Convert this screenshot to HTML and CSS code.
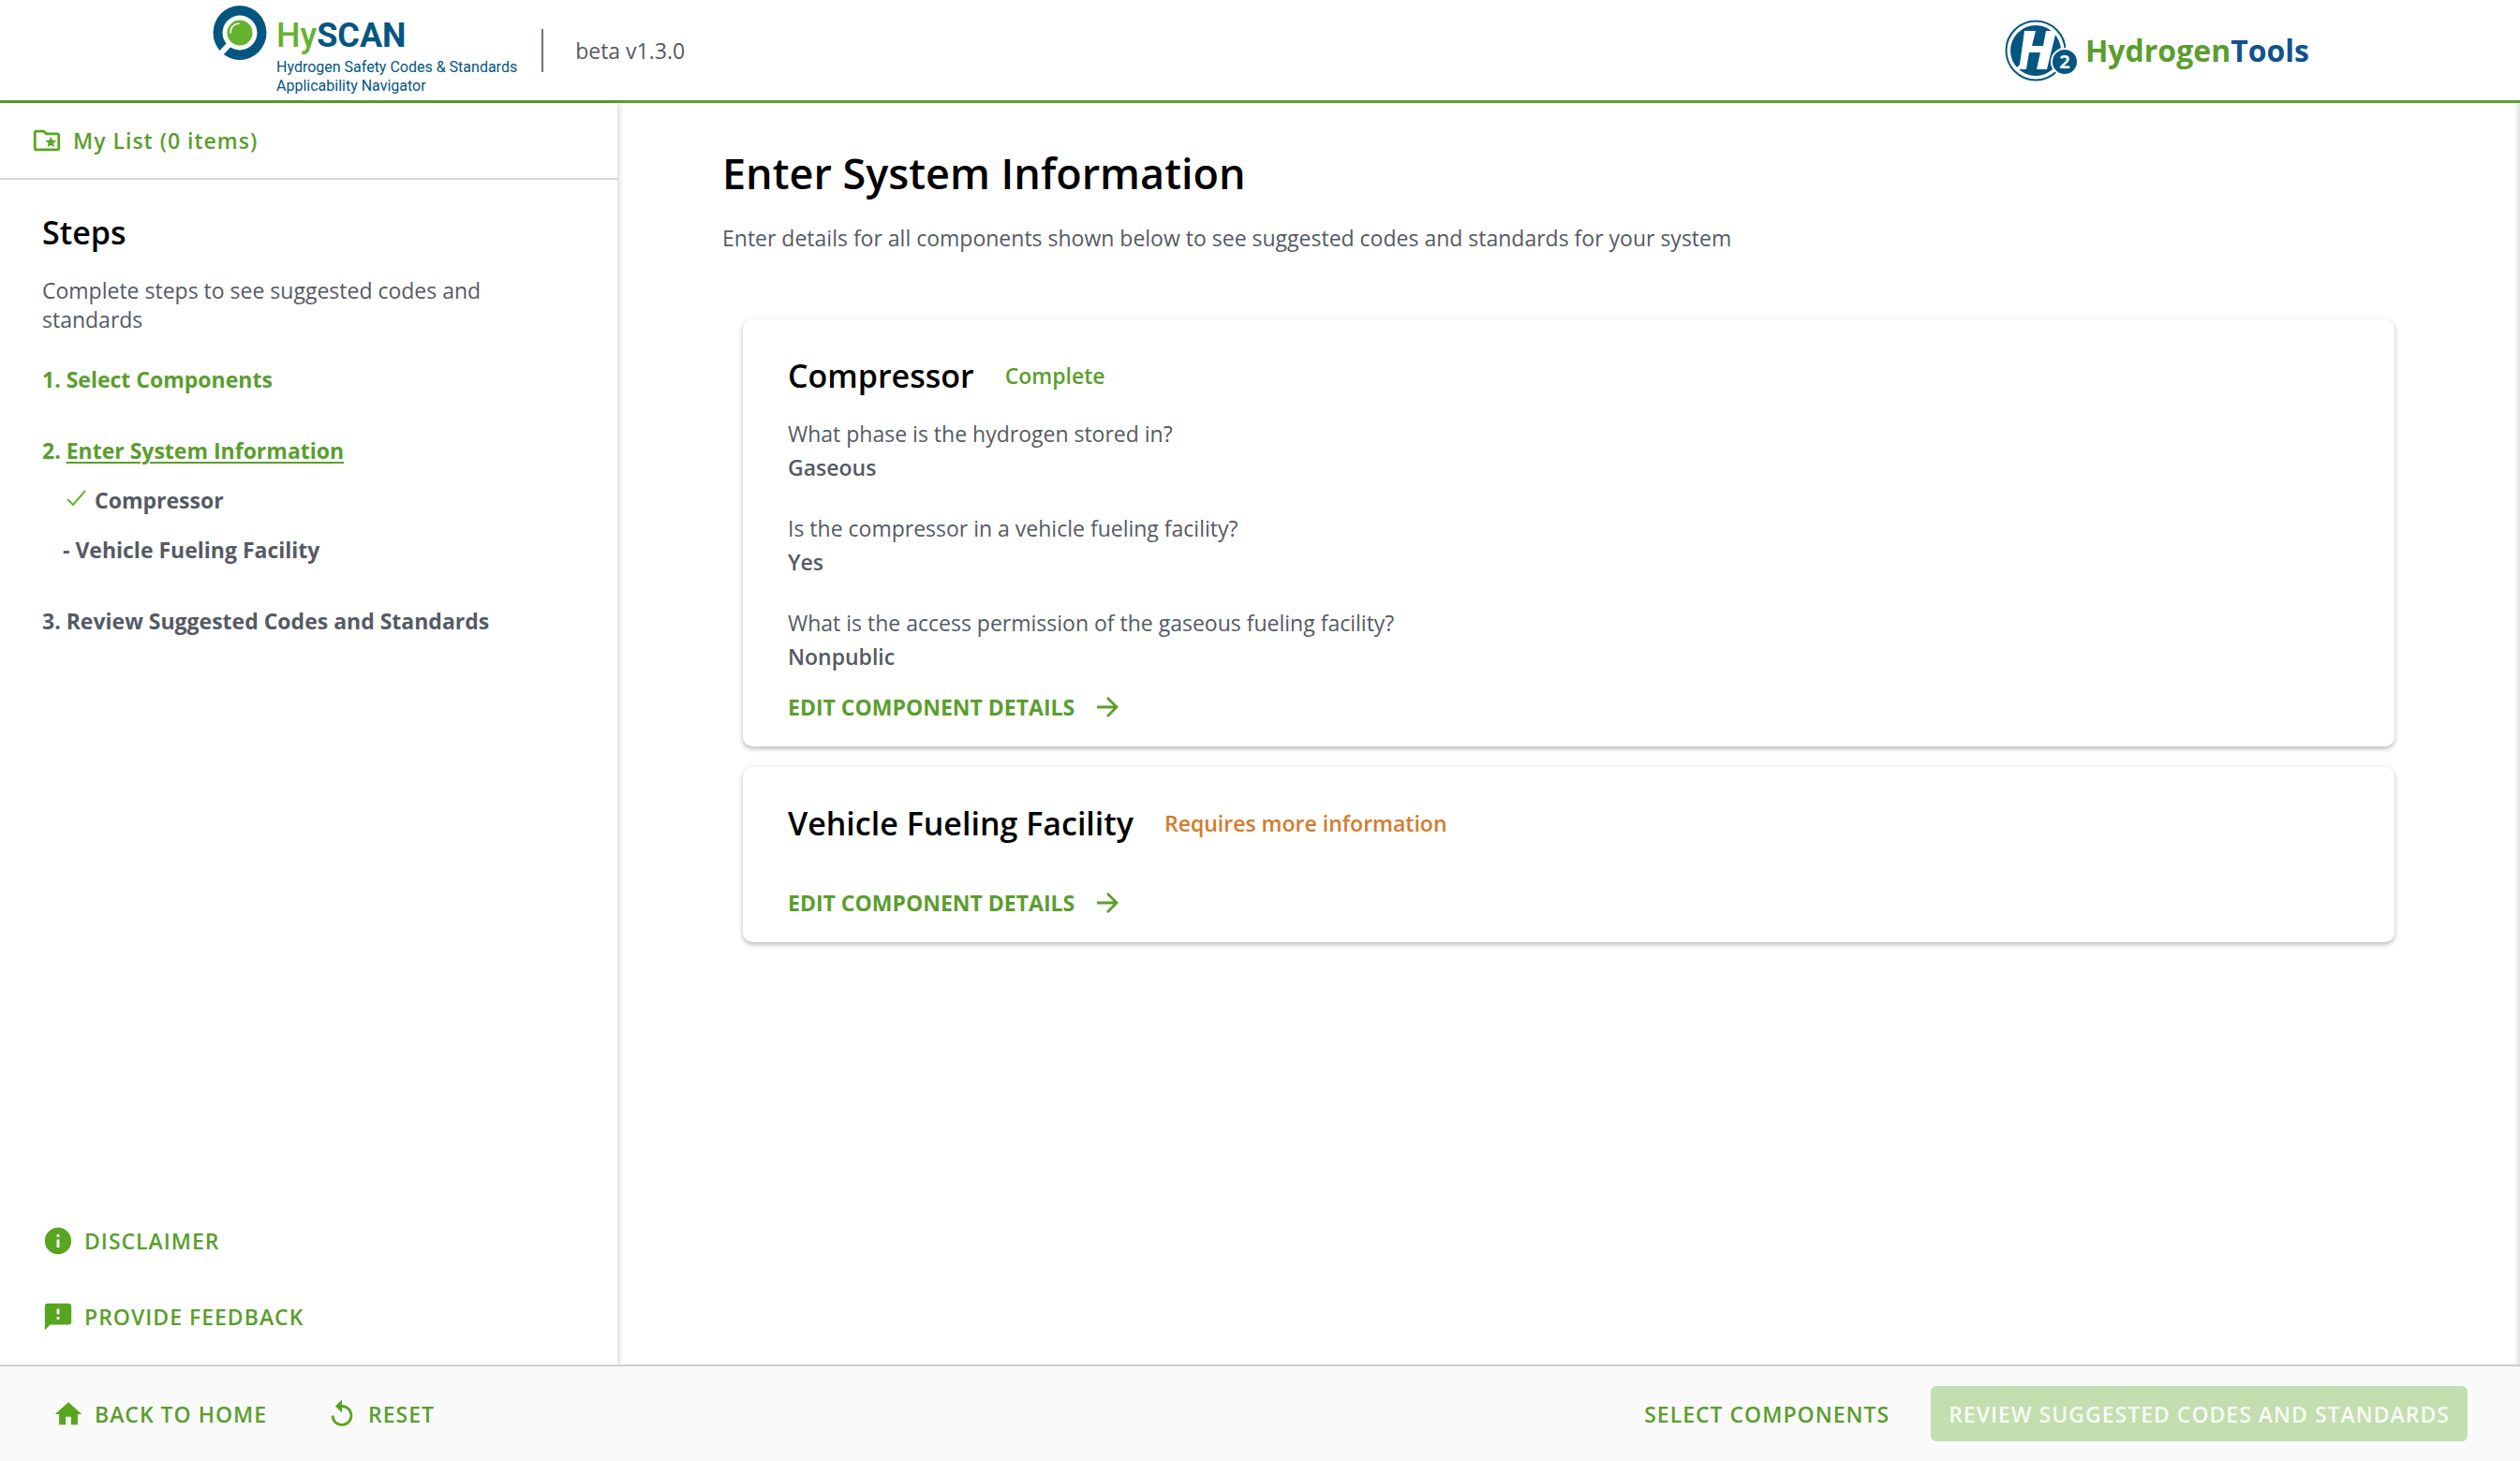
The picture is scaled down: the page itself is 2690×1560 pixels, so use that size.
FILE: index.html
```html
<!DOCTYPE html>
<html lang="en">
<head>
<meta charset="utf-8">
<meta name="viewport" content="width=device-width, initial-scale=1">
<title>HySCAN - Enter System Information</title>
<link rel="stylesheet" href="styles.css">
</head>
<body>
<header class="topbar">
  <div class="brand">
    <a class="hyscan" href="#">
      <svg class="hyscan-mark" viewBox="0 0 58 60" aria-hidden="true">
        <ellipse cx="29" cy="29" rx="28.500" ry="29" fill="#045680"/>
        <circle cx="29" cy="29" r="18.500" fill="#fff"/>
        <path d="M19 40 L6 54" stroke="#fff" stroke-width="6"/>
        <circle cx="29" cy="29" r="13.500" fill="#64b32e"/>
        <path d="M19 29c0-5 3-9 9-10" fill="none" stroke="#fff" stroke-width="1.500" stroke-linecap="round"/>
      </svg>
      <span class="hyscan-words">
        <span class="hyscan-name"><span class="hy">Hy</span>SCAN</span>
        <span class="hyscan-tag">Hydrogen Safety Codes &amp; Standards<br>Applicability Navigator</span>
      </span>
    </a>
    <span class="version">beta v1.3.0</span>
  </div>
  <a class="h2tools" href="#">
    <svg class="h2-mark" viewBox="0 0 80 68" aria-hidden="true">
      <circle cx="33" cy="34" r="31.500" fill="#fff" stroke="#045680" stroke-width="2"/>
      <circle cx="33" cy="34" r="27" fill="#045680"/>
      <path d="M21 13h12l-4 16h12l3-16h11L45 54H34l4-18H26l-3 18H11l5-5z" fill="#fff"/>
      <circle cx="64" cy="46" r="14" fill="#045680" stroke="#fff" stroke-width="2"/>
      <text class="h2-sub" x="64" y="53" text-anchor="middle">2</text>
    </svg>
    <span class="h2-name">Hydrogen<span class="tools">Tools</span></span>
  </a>
</header>

<div class="layout">
  <aside class="sidebar">
    <a class="my-list" href="#">
      <svg class="icon" viewBox="0 0 24 24" aria-hidden="true"><path d="M20 6h-8l-2-2H4c-1.100 0-2 .9-2 2v12c0 1.100.9 2 2 2h16c1.100 0 2-.9 2-2V8c0-1.100-.9-2-2-2zm0 12H4V6h5.170l2 2H20v10zm-6.920-3.960L12.390 17 15 15.470 17.610 17l-.69-2.960 2.300-1.990-3.030-.26L15 9l-1.190 2.790-3.030.26z"/></svg>
      My List (0 items)
    </a>
    <nav class="steps" aria-label="Steps">
      <h2 class="heading">Steps</h2>
      <p class="steps-intro">Complete steps to see suggested codes and standards</p>
      <ol class="step-list">
        <li><a class="step done" href="#">1. Select Components</a></li>
        <li>
          <a class="step done" href="#">2. <span class="current">Enter System Information</span></a>
          <ul class="substeps">
            <li><a class="step checked" href="#"><svg class="check" viewBox="0 0 22 20" aria-hidden="true"><path d="M1 11l6 6L20 2" fill="none" stroke="#64b32e" stroke-width="2"/></svg>Compressor</a></li>
            <li><a class="step" href="#">- Vehicle Fueling Facility</a></li>
          </ul>
        </li>
        <li><a class="step" href="#">3. Review Suggested Codes and Standards</a></li>
      </ol>
    </nav>
    <div class="help">
      <button class="text-button" type="button"><svg class="icon" viewBox="0 0 24 24" aria-hidden="true"><path d="M12 2C6.480 2 2 6.480 2 12s4.480 10 10 10 10-4.480 10-10S17.520 2 12 2zm1 15h-2v-6h2v6zm0-8h-2V7h2v2z"/></svg>DISCLAIMER</button>
      <button class="text-button" type="button"><svg class="icon" viewBox="0 0 24 24" aria-hidden="true"><path d="M20 2H4c-1.100 0-1.990.9-1.990 2L2 22l4-4h14c1.100 0 2-.9 2-2V4c0-1.100-.9-2-2-2zm-7 12h-2v-2h2v2zm0-4h-2V6h2v4z"/></svg>PROVIDE FEEDBACK</button>
    </div>
  </aside>

  <main class="content">
    <h1 class="title">Enter System Information</h1>
    <p class="lead">Enter details for all components shown below to see suggested codes and standards for your system</p>
    <div class="cards">
      <section class="card">
        <div class="card-head"><h2 class="heading">Compressor</h2><span class="status ok">Complete</span></div>
        <dl class="answers">
          <div><dt>What phase is the hydrogen stored in?</dt><dd>Gaseous</dd></div>
          <div><dt>Is the compressor in a vehicle fueling facility?</dt><dd>Yes</dd></div>
          <div><dt>What is the access permission of the gaseous fueling facility?</dt><dd>Nonpublic</dd></div>
        </dl>
        <a class="edit" href="#">EDIT COMPONENT DETAILS<svg class="arrow" viewBox="0 0 24 24" aria-hidden="true"><path d="M1 12h20M12 2l10 10-10 10" fill="none" stroke="currentColor" stroke-width="2.800"/></svg></a>
      </section>
      <section class="card pending">
        <div class="card-head"><h2 class="heading">Vehicle Fueling Facility</h2><span class="status warn">Requires more information</span></div>
        <a class="edit" href="#">EDIT COMPONENT DETAILS<svg class="arrow" viewBox="0 0 24 24" aria-hidden="true"><path d="M1 12h20M12 2l10 10-10 10" fill="none" stroke="currentColor" stroke-width="2.800"/></svg></a>
      </section>
    </div>
  </main>
</div>

<footer class="actions">
  <div class="actions-left">
    <button class="text-button" type="button"><svg class="icon" viewBox="0 0 24 24" aria-hidden="true"><path d="M10 20v-6h4v6h5v-8h3L12 3 2 12h3v8z"/></svg>BACK TO HOME</button>
    <button class="text-button" type="button"><svg class="icon" viewBox="0 0 24 24" aria-hidden="true"><path d="M12 5V1L7 6l5 5V7c3.310 0 6 2.690 6 6s-2.690 6-6 6-6-2.690-6-6H4c0 4.420 3.580 8 8 8s8-3.580 8-8-3.580-8-8-8z"/></svg>RESET</button>
  </div>
  <div class="actions-right">
    <button class="text-button" type="button">SELECT COMPONENTS</button>
    <button class="primary" type="button" disabled>REVIEW SUGGESTED CODES AND STANDARDS</button>
  </div>
</footer>
</body>
</html>
```
FILE: styles.css
```css
:root {
  --green: #5a9e2d;
  --icon-green: #58a51f;
  --navy: #045680;
  --text: #555a64;
  --line: #dadada;
}

* { box-sizing: border-box; }

body {
  margin: 0;
  min-height: 100vh;
  display: flex;
  flex-direction: column;
  background: #fff;
  color: var(--text);
  font: 400 23px/30px "Open Sans", sans-serif;
}

h1, h2, p, ol, ul, dl, dd { margin: 0; padding: 0; }
ol, ul { list-style: none; }
a { color: inherit; text-decoration: none; }
svg { display: block; flex: none; }

button {
  padding: 0;
  border: 0;
  background: none;
  font: inherit;
}

/* Header */
.topbar {
  display: flex;
  justify-content: space-between;
  align-items: center;
  height: 110px;
  padding: 0 225px 0 227px;
  border-bottom: 3px solid var(--green);
}
.brand, .h2tools { display: flex; align-items: center; }
.hyscan { display: flex; align-items: flex-start; gap: 10px; color: var(--navy); }
.hyscan-mark { width: 58px; height: 60px; }
.hyscan-words { display: flex; flex-direction: column; gap: 4px; padding-top: 12px; font-family: Roboto, sans-serif; }
.hyscan-name { font-size: 36px; line-height: 40px; font-weight: 700; }
.hy { color: #64b32e; font-weight: 500; }
.hyscan-tag { font-size: 16px; line-height: 20px; }
.version { margin-left: 26px; padding-left: 34px; border-left: 2px solid #6b7080; line-height: 46px; }
.h2tools { gap: 6px; }
.h2-mark { width: 80px; height: 68px; }
.h2-sub { font: 700 20px "Open Sans", sans-serif; fill: #fff; }
.h2-name { font-size: 32px; line-height: 44px; font-weight: 700; color: var(--green); }
.tools { color: #10528f; }

/* Sidebar */
.layout { flex: 1; display: flex; }
.sidebar {
  flex: 0 0 659px;
  display: flex;
  flex-direction: column;
  box-shadow: 2px 0 6px rgba(0, 0, 0, .16);
}
.my-list {
  display: flex;
  align-items: center;
  gap: 11px;
  height: 82px;
  padding: 0 33px;
  border-bottom: 2px solid var(--line);
  color: var(--green);
  font-weight: 600;
  letter-spacing: 1px;
}
.icon { width: 34px; height: 34px; fill: var(--icon-green); }
.steps { padding: 33px 45px; }
.heading { color: #000; font-size: 34px; line-height: 46px; font-weight: 600; }
.steps-intro { margin: 24px 0 33px; line-height: 31px; }
.step-list { display: flex; flex-direction: column; gap: 46px; font-weight: 700; }
.substeps { display: flex; flex-direction: column; gap: 23px; padding: 23px 0 0 22px; }
.done { color: var(--green); }
.current { text-decoration: underline; text-decoration-thickness: 2px; text-underline-offset: 3px; }
.checked { display: flex; gap: 8px; padding-left: 4px; }
.check { width: 22px; height: 20px; margin-top: 3px; }
.help { display: flex; flex-direction: column; align-items: flex-start; gap: 47px; margin-top: auto; padding: 0 45px 34px; }
.text-button { display: flex; align-items: center; gap: 11px; color: var(--green); font-weight: 600; letter-spacing: 1px; }

/* Main */
.content { flex: 1; padding: 45px 112px; box-shadow: inset -6px 0 6px -4px rgba(0, 0, 0, .16); }
.title { color: #000; font-size: 45px; line-height: 60px; font-weight: 600; }
.lead { margin-top: 24px; }
.cards { display: flex; flex-direction: column; gap: 22px; padding: 72px 22px 0; }
.card {
  padding: 37px 48px 27px;
  border-radius: 10px;
  background: #fff;
  box-shadow: 0 3px 5px rgba(0, 0, 0, .22), 0 0 6px rgba(0, 0, 0, .07);
}
.card-head { display: flex; align-items: center; gap: 33px; }
.status { font-weight: 600; }
.ok { color: var(--green); }
.warn { color: #d57b2a; }
.answers { display: flex; flex-direction: column; gap: 35px; margin: 24px 0; }
.answers dd { margin-top: 6px; font-weight: 600; }
.edit { display: flex; align-items: center; gap: 23px; color: var(--green); font-weight: 700; }
.arrow { width: 24px; height: 24px; }
.pending .edit { margin-top: 47px; }

/* Footer */
.actions {
  display: flex;
  justify-content: space-between;
  align-items: center;
  height: 103px;
  padding: 0 56px;
  border-top: 2px solid #cfcfcf;
  background: #fafafa;
}
.actions-left { display: flex; gap: 63px; }
.actions-right { display: flex; gap: 44px; }
.primary {
  height: 59px;
  padding: 0 19px;
  border-radius: 6px;
  background: #c3deaf;
  color: #f8fbf6;
  font-weight: 600;
  letter-spacing: 1px;
}
```
